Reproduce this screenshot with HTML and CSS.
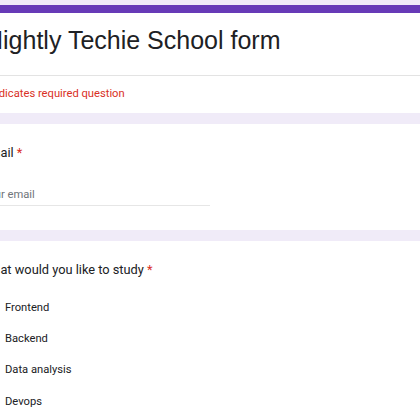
FILE: index.html
```html
<!DOCTYPE html>
<html lang="en">
<head>
<meta charset="utf-8">
<title>Nightly Techie School form</title>
<link rel="stylesheet" href="styles.css">
</head>
<body>
<main class="form">
  <section class="card header-card">
    <div class="accent"></div>
    <h1 class="form-title">Nightly Techie School form</h1>
    <div class="divider"></div>
    <p class="required-note">* Indicates required question</p>
  </section>

  <section class="card question-card">
    <div class="question-title">Email <span class="star">*</span></div>
    <div class="text-input"><span class="placeholder">Your email</span></div>
  </section>

  <section class="card question-card options-card">
    <div class="question-title">What would you like to study <span class="star">*</span></div>
    <ul class="options">
      <li class="option"><span class="checkbox"></span><span class="option-label">Frontend</span></li>
      <li class="option"><span class="checkbox"></span><span class="option-label">Backend</span></li>
      <li class="option"><span class="checkbox"></span><span class="option-label">Data analysis</span></li>
      <li class="option"><span class="checkbox"></span><span class="option-label">Devops</span></li>
    </ul>
  </section>
</main>
</body>
</html>
```

FILE: styles.css
```css
html, body {
  margin: 0;
  padding: 0;
  overflow: hidden;
}

body {
  background: #f0ebf8;
  font-family: Roboto, "Noto Sans", sans-serif;
  color: #202124;
}

.form {
  display: flex;
  flex-direction: column;
  gap: 11px;
  padding-top: 5px;
  margin-left: -42px;
  width: 520px;
}

.card {
  background: #ffffff;
}

.accent {
  height: 8px;
  background: #673ab7;
}

.form-title {
  margin: 0;
  padding: 12px 24px 20px 27px;
  font-family: "Liberation Sans", Arial, sans-serif;
  font-weight: 400;
  font-size: 25px;
  line-height: 30px;
  color: #202124;
}

.divider {
  height: 1px;
  background: #e3e3e3;
}

.required-note {
  margin: 0;
  padding: 11px 24px 12px;
  font-size: 11.2px;
  line-height: 14px;
  color: #d93025;
}

.question-card {
  padding: 20px 24px 24px;
}

.question-title {
  font-size: 12.8px;
  line-height: 18px;
  color: #202124;
}

.star {
  color: #d93025;
}

.text-input {
  margin-top: 26px;
  width: 228px;
  padding-bottom: 3px;
  border-bottom: 1px solid #e6e6e6;
  font-size: 11.2px;
  line-height: 14px;
}

.placeholder {
  color: #70757a;
}

.options-card {
  padding-top: 20px;
}

.options {
  list-style: none;
  margin: 13px 0 0;
  padding: 0;
}

.option {
  display: flex;
  align-items: center;
  gap: 9px;
  height: 31.3px;
}

.checkbox {
  flex: none;
  width: 10px;
  height: 10px;
  border: 2px solid #5f6368;
  border-radius: 2px;
}

.option-label {
  font-size: 11.2px;
  line-height: 14px;
  color: #202124;
}
```
